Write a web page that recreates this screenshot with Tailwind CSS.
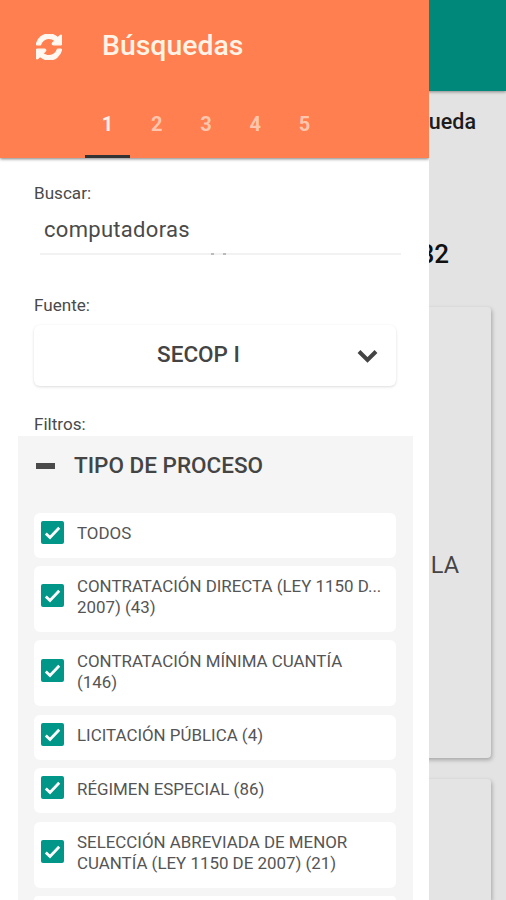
<!DOCTYPE html>
<html lang="es">
<head>
<meta charset="utf-8">
<title>Búsquedas</title>
<script src="https://cdn.jsdelivr.net/npm/@tailwindcss/browser@4"></script>
</head>
<body class="relative h-[900px] w-[506px] overflow-hidden bg-[#e3e3e3] font-[Roboto,sans-serif]">

<!-- Results page under the drawer -->
<main class="flex h-[900px] flex-col">
  <div class="h-[91px] shrink-0 bg-[#00897b] shadow-[0_1px_3px_rgba(0,0,0,0.4)]"></div>
  <h2 class="mt-[15px] h-8 shrink-0 pr-[30px] text-right text-[21.500px] leading-8 font-medium text-[#1c1c1c]">Búsqueda</h2>
  <p class="mt-[100px] h-8 shrink-0 pr-[57px] text-right text-[26px] leading-8 font-medium text-[#111]">82</p>
  <section class="mt-[37px] mr-[15px] ml-4 h-[451px] shrink-0 rounded bg-[#e4e4e4] pt-[242px] pr-[32px] text-right text-[23.500px] leading-8 text-[#444] shadow-[1px_2px_4px_rgba(0,0,0,0.28)]">LA</section>
  <section class="mt-[21px] mr-[15px] ml-4 flex-1 rounded-t bg-[#e4e4e4] shadow-[1px_2px_4px_rgba(0,0,0,0.28)]"></section>
</main>

<!-- Search drawer -->
<aside class="absolute inset-y-0 left-0 flex w-[429px] flex-col overflow-hidden bg-white">
  <header class="flex h-[158px] shrink-0 flex-col bg-[#ff7f50] shadow-[0_1px_3px_rgba(0,0,0,0.5)]">
    <div class="flex h-[90px] items-center pt-[2px] pl-9">
      <svg class="mt-[1px] size-[26px]" viewBox="0 0 1536 1536" fill="#fff8f0" stroke="#fff8f0" stroke-width="70"><path d="M1511 928q0 5-1 7-64 268-268 434.500t-478 166.500q-146 0-282.500-55t-243.500-157l-129 129q-19 19-45 19t-45-19-19-45v-448q0-26 19-45t45-19h448q26 0 45 19t19 45-19 45l-137 137q71 66 161 102t187 36q134 0 250-65t186-179q11-17 53-117 8-23 30-23h192q13 0 22.500 9.500t9.500 22.500zm25-800v448q0 26-19 45t-45 19h-448q-26 0-45-19t-19-45 19-45l138-138q-148-137-349-137-134 0-250 65t-186 179q-11 17-53 117-8 23-30 23h-199q-13 0-22.500-9.500t-9.500-22.500v-7q65-268 270-434.500t480-166.500q146 0 284 55.500t245 156.500l130-129q19-19 45-19t45 19 19 45z"/></svg>
      <h1 class="ml-10 text-[28.400px] leading-9 font-medium text-[#fff3e6]">Búsquedas</h1>
    </div>
    <nav class="flex h-[68px] pl-[85px] text-center text-[20px] leading-[68px] font-bold text-[#ffc6ad]">
      <span class="w-[45px] border-b-[3px] border-[#333] text-[#fff0e6]">1</span>
      <span class="ml-[2px] w-[49.300px]">2</span>
      <span class="w-[49.300px]">3</span>
      <span class="w-[49.300px]">4</span>
      <span class="w-[49.300px]">5</span>
    </nav>
  </header>

  <div class="flex flex-col px-[34px] pt-[24px] text-[#4a4a4a]">
    <label class="text-[17.100px] leading-[22px]">Buscar:</label>
    <div class="relative mr-[-6px] ml-[6px] h-[51px] border-b-2 border-[#f2f2f2] pl-1 text-[22px] leading-[52px] tracking-[0.3px]">computadoras
      <span class="absolute top-[49px] left-[171px] h-[2px] w-[3px] bg-[#bbb]"></span>
      <span class="absolute top-[49px] left-[183px] h-[2px] w-[3px] bg-[#bbb]"></span>
    </div>
    <label class="mt-[39px] text-[17.100px] leading-[22px]">Fuente:</label>
    <div class="mt-[9px] mr-[-1px] flex h-[61px] items-center rounded-md bg-white pr-[18px] pb-[2px] shadow-[0_1px_3px_rgba(0,0,0,0.14)]">
      <span class="flex-1 pl-[6px] text-center text-[22.500px] font-medium text-[#444]">SECOP I</span>
      <svg class="mt-[2px] h-[14px] w-[21px]" viewBox="0 0 21 14" fill="none" stroke="#444" stroke-width="4"><path d="M2 2.500l8.500 8.500L19 2.500"/></svg>
    </div>
    <label class="mt-[27px] mb-[1px] text-[17.100px] leading-[22px]">Filtros:</label>
  </div>

  <section class="ml-[18px] flex min-h-0 w-[395px] flex-1 flex-col overflow-hidden bg-[#f5f5f5] pr-[17px] pl-4">
    <div class="flex h-[76.500px] shrink-0 items-start pt-[15px]">
      <span class="mt-[12px] ml-[2px] h-[6px] w-[19px] bg-[#4a4a4a]"></span>
      <h3 class="ml-[19px] text-[22.500px] leading-[29px] font-medium text-[#444]">TIPO DE PROCESO</h3>
    </div>
    <ul id="filters" class="flex min-h-0 flex-1 flex-col gap-[8.600px] overflow-hidden text-[16.900px] leading-[21px] text-[#555]"></ul>
  </section>
</aside>

<template id="row">
  <li class="flex shrink-0 items-center rounded-md bg-white pl-[7px]">
    <svg class="mb-[6px] size-[23px] shrink-0" viewBox="0 0 23 23"><rect width="23" height="23" rx="2" fill="#009688"/><path d="M4.800 12.500l4.200 4 9.200-9.800" fill="none" stroke="#fff" stroke-width="2.800"/></svg>
    <span class="mb-[3px] ml-[13px] whitespace-pre"></span>
  </li>
</template>
<script>
const rows = [
  ["TODOS", 45],
  ["CONTRATACIÓN DIRECTA (LEY 1150 D...\n2007) (43)", 65.7],
  ["CONTRATACIÓN MÍNIMA CUANTÍA\n(146)", 65.7],
  ["LICITACIÓN PÚBLICA (4)", 45],
  ["RÉGIMEN ESPECIAL (86)", 45],
  ["SELECCIÓN ABREVIADA DE MENOR\nCUANTÍA (LEY 1150 DE 2007) (21)", 65.7],
];
const list = document.getElementById("filters");
for (const [label, height] of rows) {
  const item = document.getElementById("row").content.cloneNode(true);
  item.querySelector("span").textContent = label;
  item.querySelector("li").style.height = height + "px";
  list.append(item);
}
// Upper edge of the next option, cut by the end of the viewport
const next = document.createElement("li");
next.className = "flex-1 rounded-t-md bg-white";
list.append(next);
</script>
</body>
</html>
